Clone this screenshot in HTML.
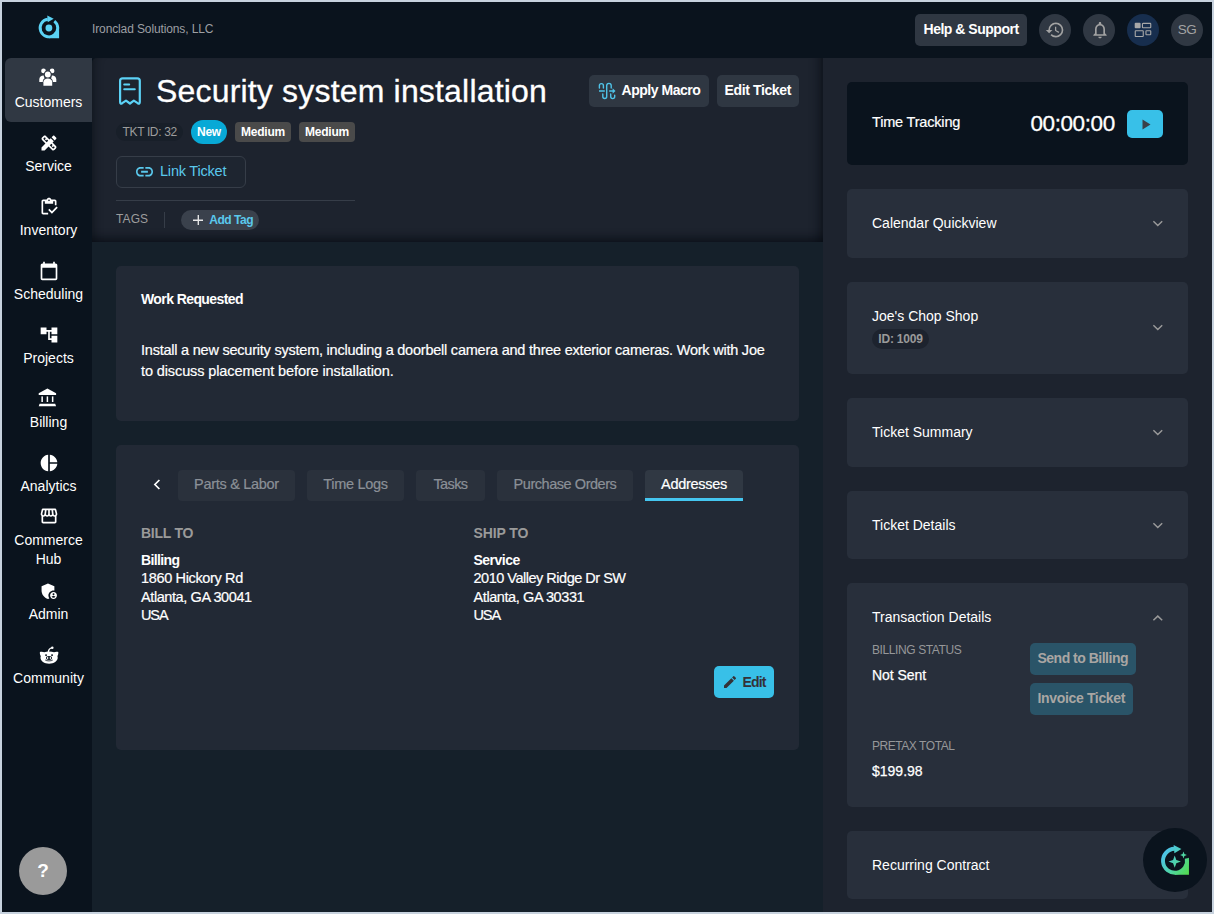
<!DOCTYPE html>
<html lang="en">
<head>
<meta charset="utf-8">
<title>Security system installation</title>
<style>
*{box-sizing:border-box;margin:0;padding:0}
html,body{width:1214px;height:914px;overflow:hidden;background:#c7d2de}
body{font-family:"Liberation Sans",sans-serif;color:#fff;position:relative}
#app{position:absolute;left:2px;top:2px;width:1210px;height:910px;background:#0a131d;overflow:hidden}
#pg{position:absolute;left:-2px;top:-2px;width:1214px;height:914px}
.a{position:absolute}
.t{position:absolute;white-space:nowrap;font-size:14px;line-height:16px}
.r{font-size:14.500px;-webkit-text-stroke:.2px}
.b{font-weight:bold;font-size:14px;letter-spacing:-.45px}
.nav{position:absolute;left:5px;width:87px;height:64px}
.nav svg{position:absolute;left:33.6px;top:10.6px;width:20px;height:20px}
.nav span{position:absolute;left:0;width:87px;top:36px;font-size:14px;line-height:16px;color:#fff;text-align:center;white-space:nowrap}
.card{position:absolute;left:847px;width:341px;background:#282f3b;border-radius:5px}
.ttl{position:absolute;left:872px;font-size:14px;line-height:16px;color:#fff;white-space:nowrap}
.chev{position:absolute;left:1151.5px;width:12px;height:8px}
.btn{position:absolute;border-radius:5px;background:#2f3742;height:32px}
.pcard{position:absolute;left:116px;width:683px;background:#222935;border-radius:5px}
.tab{position:absolute;top:470px;height:31px;background:#2a313c;border-radius:4px}
.tab span{position:absolute;top:6px;left:0;width:100%;text-align:center;color:#8b9097;font-size:14.500px;line-height:16px;white-space:nowrap;-webkit-text-stroke:.2px;letter-spacing:-.3px}
.circ{position:absolute;top:14px;width:32px;height:32px;border-radius:50%;background:#303843}
.pill{position:absolute;border-radius:12px}
</style>
</head>
<body>
<div id="app"><div id="pg">
<!-- TOP BAR -->
<svg class="a" style="left:37px;top:14px;width:24px;height:26px" viewBox="37 14 24 26">
  <g fill="#5ad2f4">
    <path d="M54.320 21.070 A8.800 8.800 0 1 1 47.830 19.270" fill="none" stroke="#5ad2f4" stroke-width="2.900"/>
    <path d="M59.100 27 V38.200 H48.900 V37.700 A9.700 9.700 0 0 0 58.600 28 V27 Z"/>
    <path d="M47.300 15.400 L53.700 18.800 L47.700 22.300 Z"/>
    <circle cx="48.900" cy="28" r="3.400"/>
  </g>
</svg>
<div class="t" style="left:92px;top:22px;font-size:12px;line-height:14px;color:#9d9fa3;letter-spacing:-.12px">Ironclad Solutions, LLC</div>

<div class="btn" style="left:915px;top:14px;width:112px"><span class="t b" style="left:8.500px;top:6.500px;letter-spacing:-.48px">Help &amp; Support</span></div>

<div class="circ" style="left:1039px">
  <svg class="a" style="left:6.200px;top:5.700px;width:20px;height:20px" viewBox="0 0 24 24" fill="#a3a3a3"><path d="M13 3a9 9 0 0 0-9 9H1l3.890 3.890.070.140L9 12H6c0-3.870 3.130-7 7-7s7 3.130 7 7-3.130 7-7 7c-1.930 0-3.680-.79-4.940-2.060l-1.420 1.420A8.954 8.954 0 0 0 13 21a9 9 0 0 0 0-18zm-1 5v5l4.250 2.520.770-1.280-3.520-2.090V8z"/></svg>
</div>
<div class="circ" style="left:1083px">
  <svg class="a" style="left:6.500px;top:6px;width:20px;height:20px" viewBox="0 0 24 24" fill="#a3a3a3"><path d="M12 22c1.100 0 2-.9 2-2h-4c0 1.100.9 2 2 2zm6-6v-5c0-3.070-1.630-5.640-4.500-6.320V4c0-.83-.67-1.500-1.500-1.500s-1.500.67-1.500 1.500v.68C7.640 5.360 6 7.920 6 11v5l-2 2v1h16v-1l-2-2zm-2 1H8v-6c0-2.480 1.510-4.500 4-4.500s4 2.020 4 4.500v6z"/></svg>
</div>
<div class="circ" style="left:1127px;background:#172e4e">
  <svg class="a" style="left:7px;top:8px;width:18px;height:16px" viewBox="0 0 18 16" fill="none" stroke="#a8a8a8" stroke-width="1.100">
    <rect x="0.700" y="0.800" width="5.900" height="5.500" rx="1" fill="#a8a8a8" stroke="none"/>
    <rect x="8.450" y="1.350" width="8.300" height="4.400" rx=".6"/>
    <rect x="1.250" y="8.750" width="8" height="5.800" rx=".6"/>
    <rect x="11.950" y="8.750" width="4.800" height="4" rx=".6"/>
  </svg>
</div>
<div class="circ" style="left:1171px"><span class="t" style="left:0;width:32px;text-align:center;top:7.500px;font-size:13.500px;line-height:16px;letter-spacing:-.5px;color:#a3a3a3">SG</span></div>

<!-- SIDEBAR -->
<div class="a" style="left:5px;top:58px;width:87px;height:64px;border-radius:6px 0 0 6px;background:#303843"></div>
<div class="nav" style="top:58px">
  <svg viewBox="37.500 67 20 20" style="left:32.500px;top:9px" fill="#fff">
    <circle cx="43" cy="70.900" r="2.350"/><circle cx="51.600" cy="70.900" r="2.350"/>
    <circle cx="47.300" cy="74.500" r="3.900" fill="#303843"/><circle cx="47.300" cy="74.500" r="2.900"/>
    <path d="M38.800 81.900 V79.200 C38.800 76.800 40.800 75.300 43.200 75.400 C43.300 77 44.100 78.200 44.100 78.200 C42.800 79 42.300 80.200 42.300 81.900 Z"/>
    <path d="M55.800 81.900 V79.200 C55.800 76.800 53.800 75.300 51.400 75.400 C51.300 77 50.500 78.200 50.500 78.200 C51.800 79 52.300 80.200 52.300 81.900 Z"/>
    <path d="M42.900 85.800 V82.200 C42.900 79.700 44.900 78.500 47.300 78.500 C49.700 78.500 51.700 79.700 51.700 82.200 V85.800 Z"/>
  </svg>
  <span>Customers</span>
</div>
<div class="nav" style="top:122px">
  <svg viewBox="0 0 24 24" fill="#fff"><path d="M16.240 11.510l1.570-1.570-3.750-3.750-1.570 1.570-4.140-4.130c-.78-.78-2.050-.78-2.830 0l-1.900 1.900c-.78.780-.78 2.050 0 2.830l4.130 4.130L3 17.250V21h3.750l4.760-4.760 4.130 4.130c.95.950 2.230.6 2.830 0l1.900-1.900c.78-.78.780-2.050 0-2.830l-4.130-4.130zm-7.060-.44L5.040 6.940l1.890-1.900L8.200 6.310 7.020 7.500l1.410 1.410 1.190-1.190 1.450 1.450-1.890 1.900zm7.880 7.890l-4.130-4.130 1.900-1.900 1.450 1.450-1.190 1.190 1.410 1.410 1.190-1.190 1.270 1.270-1.900 1.900zM20.710 7.040c.39-.39.390-1.020 0-1.410l-2.340-2.340c-.47-.47-1.120-.29-1.410 0l-1.830 1.830 3.750 3.750 1.830-1.830z"/></svg>
  <span>Service</span>
</div>
<div class="nav" style="top:186px">
  <svg viewBox="0 0 24 24" fill="#fff"><path d="M5 5h2v3h10V5h2v5h2V5c0-1.100-.9-2-2-2h-4.180C14.400 1.840 13.300 1 12 1s-2.400.84-2.820 2H5c-1.100 0-2 .9-2 2v14c0 1.100.9 2 2 2h6v-2H5V5zm7-2c.55 0 1 .45 1 1s-.45 1-1 1-1-.45-1-1 .45-1 1-1z"/><path d="M21 11.500l-5.490 5.500-3.010-3-1.500 1.500 4.510 4.500 6.990-7z"/></svg>
  <span>Inventory</span>
</div>
<div class="nav" style="top:250px">
  <svg viewBox="0 0 24 24" fill="#fff"><path d="M20 3h-1V1h-2v2H7V1H5v2H4c-1.100 0-2 .9-2 2v16c0 1.100.9 2 2 2h16c1.100 0 2-.9 2-2V5c0-1.100-.9-2-2-2zm0 18H4V8h16v13z"/></svg>
  <span>Scheduling</span>
</div>
<div class="nav" style="top:314px">
  <svg viewBox="0 0 24 24" fill="#fff"><path d="M22 11V3h-7v3H9V3H2v8h7V8h2v10h4v3h7v-8h-7v3h-2V8h2v3z"/></svg>
  <span>Projects</span>
</div>
<div class="nav" style="top:378px">
  <svg viewBox="37 387 20 20" style="left:32px;top:9px" fill="#fff">
    <path d="M38.700 394.900 V393.300 L47.400 388.600 L56.100 393.300 V394.900 Z"/>
    <rect x="41.400" y="396.400" width="1.500" height="5.600"/><rect x="46.650" y="396.400" width="1.500" height="5.600"/><rect x="51.900" y="396.400" width="1.500" height="5.600"/>
    <path d="M38.700 406.200 L39.600 403.800 H55.200 L56.100 406.200 Z"/>
  </svg>
  <span>Billing</span>
</div>
<div class="nav" style="top:442px">
  <svg viewBox="0 0 24 24" fill="#fff"><path d="M11 2v20c-5.070-.5-9-4.790-9-10s3.930-9.500 9-10zm2.030 0v8.990H22c-.47-4.740-4.240-8.520-8.970-8.990zm0 11.010V22c4.740-.47 8.500-4.250 8.970-8.990h-8.970z"/></svg>
  <span>Analytics</span>
</div>
<div class="nav" style="top:506px">
  <svg viewBox="0 0 24 24" style="top:0.200px;left:34px" fill="#fff"><path d="M21.900 8.890l-1.050-4.370c-.22-.9-1-1.520-1.910-1.520H5.050c-.9 0-1.690.63-1.900 1.520L2.100 8.890c-.24 1.020-.02 2.060.62 2.880.8.110.19.190.28.290V19c0 1.100.9 2 2 2h14c1.100 0 2-.9 2-2v-6.940c.09-.9.200-.18.280-.28.640-.82.870-1.870.62-2.890zm-2.990-3.900l1.050 4.370c.1.420.1.840-.25 1.170-.14.180-.44.470-.94.470-.61 0-1.140-.49-1.210-1.140L16.980 5l1.930-.01zM13 5h1.960l.54 4.520c.5.390-.7.780-.33 1.070-.22.260-.54.410-.95.410-.67 0-1.220-.59-1.220-1.310V5zM8.490 9.520L9.040 5H11v4.690c0 .72-.55 1.310-1.290 1.310-.34 0-.65-.15-.89-.41-.25-.29-.37-.68-.33-1.070zm-4.450-.16L5.050 5h1.970l-.58 4.860c-.8.650-.6 1.140-1.210 1.140-.49 0-.8-.29-.93-.47-.27-.32-.36-.75-.26-1.170zM5 19v-6.030c.8.010.15.030.23.030.87 0 1.660-.36 2.240-.95.600.6 1.400.95 2.310.95.870 0 1.650-.36 2.230-.93.590.57 1.390.93 2.290.93.840 0 1.640-.35 2.240-.95.580.59 1.370.95 2.240.95.080 0 .15-.2.230-.03V19H5z"/></svg>
  <span style="top:25px;line-height:18.600px">Commerce<br>Hub</span>
</div>
<div class="nav" style="top:570px">
  <svg viewBox="0 0 24 24" style="width:20.500px;height:20.500px" fill="#fff"><path d="M17 11c.34 0 .67.040 1 .09V6.270L10.500 3 3 6.270v4.910c0 4.540 3.200 8.790 7.500 9.820.55-.13 1.080-.32 1.600-.55A5.973 5.973 0 0 1 11 17c0-3.310 2.690-6 6-6z"/><path d="M17 13c-2.210 0-4 1.790-4 4s1.790 4 4 4 4-1.790 4-4-1.790-4-4-4zm0 1.380c.62 0 1.120.51 1.120 1.120s-.51 1.120-1.120 1.120-1.120-.51-1.120-1.120.5-1.120 1.120-1.120zm0 5.370c-.93 0-1.740-.46-2.240-1.170.05-.72 1.510-1.080 2.240-1.080s2.190.36 2.240 1.080c-.5.710-1.310 1.170-2.240 1.170z"/></svg>
  <span>Admin</span>
</div>
<div class="nav" style="top:634px">
  <svg viewBox="38 645 22 20" style="left:33px;top:11px;width:22px;height:20px" fill="#fff">
    <path d="M39.900 652 C41.300 651.400 43 651.600 44.200 652.300 C45.600 651.700 47.200 651.400 49.100 651.400 C51 651.400 52.600 651.700 54 652.300 C55.200 651.600 56.900 651.400 58.300 652 C58.500 653.600 58.100 655 57.400 656 C57.600 656.600 57.700 657.200 57.700 657.800 C57.700 661.200 53.900 663.700 49.100 663.700 C44.300 663.700 40.500 661.200 40.500 657.800 C40.500 657.200 40.600 656.600 40.800 656 C40.100 655 39.700 653.600 39.900 652 Z"/>
    <path d="M48.300 652 C48.600 649.500 49.800 648.100 52 647.800" fill="none" stroke="#fff" stroke-width="1.300"/>
    <circle cx="52.300" cy="647.800" r="1.250"/>
    <rect x="45.200" y="654.300" width="1.700" height="1.600" rx=".4" fill="#0a131d"/>
    <rect x="51.200" y="654.300" width="1.700" height="1.600" rx=".4" fill="#0a131d"/>
    <ellipse cx="49" cy="658" rx="3" ry="1.900" fill="#0a131d"/>
    <ellipse cx="47.600" cy="658" rx=".75" ry="1" fill="#fff"/><ellipse cx="50.400" cy="658" rx=".75" ry="1" fill="#fff"/>
    <path d="M45.200 660 C46.500 661.200 51.500 661.200 52.800 660" fill="none" stroke="#0a131d" stroke-width=".8"/>
  </svg>
  <span>Community</span>
</div>
<div class="a" style="left:19px;top:847px;width:48px;height:48px;border-radius:50%;background:#9a9a9a"><span class="t" style="left:0;width:48px;text-align:center;top:13px;font-size:19px;line-height:22px;font-weight:bold">?</span></div>
<!-- MAIN -->
<div class="a" style="left:92px;top:58px;width:731px;height:856px;background:#15202a;border-radius:5px 0 0 0"></div>
<div class="a" style="left:92px;top:58px;width:731px;height:184px;background:#1d232e;border-radius:5px 0 0 0;box-shadow:inset 0 -12px 9px -8px rgba(4,8,14,.62), inset 12px 0 10px -10px rgba(4,8,14,.45), inset -14px 0 10px -10px rgba(4,8,14,.5)"></div>

<svg class="a" style="left:116px;top:74px;width:28px;height:34px" viewBox="116 74 28 34" fill="none" stroke="#5cd2f6" stroke-width="2.200" stroke-linejoin="round" stroke-linecap="round">
  <path d="M120.100 102 V80.800 Q120.100 78.300 122.600 78.300 H137.300 Q139.800 78.300 139.800 80.800 V102 Q139.800 104.400 137.700 103.200 L133.850 100.600 L129.950 103.500 L126 100.600 L122.200 103.200 Q120.100 104.400 120.100 102 Z"/>
  <path d="M124.200 84.400 H129.200 M124.200 89.200 H134.800" stroke-width="2"/>
</svg>
<div class="t" style="left:156px;top:72px;font-size:32px;line-height:38px;letter-spacing:.18px;-webkit-text-stroke:.3px">Security system installation</div>

<div class="btn" style="left:589px;top:75px;width:120px">
  <svg class="a" style="left:8px;top:6px;width:20px;height:20px" viewBox="597 81 20 20" fill="none" stroke="#4fc3e8" stroke-width="1.400" stroke-linecap="round">
    <path d="M599.400 88 V85.600 a2 2 0 0 1 4 0 V88"/>
    <path d="M602.800 94 V96.600 a1.950 1.950 0 0 0 3.900 0 V85.600 a2.250 2.250 0 0 1 4.500 0 V88"/>
    <path d="M610.700 94 V96.600 a2 2 0 0 0 4 0 V95.300"/>
    <path d="M599 91 H604.800 M609.200 91 H613.500" stroke-linecap="butt"/>
    <path d="M612.600 88.300 L615.500 91 L612.600 93.700 Z" fill="#4fc3e8" stroke="none"/>
  </svg>
  <span class="t b" style="left:32.500px;top:6.500px;letter-spacing:-.47px">Apply Macro</span>
</div>
<div class="btn" style="left:717px;top:75px;width:82px"><span class="t b" style="left:7.500px;top:6.500px;letter-spacing:-.37px">Edit Ticket</span></div>

<div class="pill" style="left:116px;top:123px;width:67px;height:18px;background:#181f29"><span class="t" style="left:6.500px;top:2px;font-size:12px;line-height:14px;color:#9d9d9d;letter-spacing:-.35px">TKT ID: 32</span></div>
<div class="pill" style="left:191px;top:120px;width:36px;height:24px;background:#08a9d6"><span class="t" style="left:0;width:36px;text-align:center;top:5px;font-size:12px;line-height:14px;font-weight:bold;letter-spacing:-.3px">New</span></div>
<div class="a" style="left:235px;top:122px;width:56px;height:20px;border-radius:4px;background:#4a4a4a"><span class="t" style="left:0;width:56px;text-align:center;top:3px;font-size:12px;line-height:14px;font-weight:bold;letter-spacing:-.2px">Medium</span></div>
<div class="a" style="left:299px;top:122px;width:56px;height:20px;border-radius:4px;background:#4a4a4a"><span class="t" style="left:0;width:56px;text-align:center;top:3px;font-size:12px;line-height:14px;font-weight:bold;letter-spacing:-.2px">Medium</span></div>

<div class="a" style="left:116px;top:156px;width:130px;height:32px;border:1px solid #363d48;border-radius:6px;background:#1e2530">
  <svg class="a" style="left:19.400px;top:10.300px;width:17px;height:9.600px" viewBox="0 0 20 10" preserveAspectRatio="none" fill="#5ac8ec"><path d="M1.900 5c0-1.710 1.390-3.100 3.100-3.100h4V0H5C2.240 0 0 2.240 0 5s2.240 5 5 5h4V8.100H5C3.290 8.100 1.900 6.710 1.900 5zM6 6h8V4H6v2zm9-6h-4v1.900h4c1.710 0 3.100 1.390 3.100 3.100s-1.390 3.100-3.100 3.100h-4V10h4c2.760 0 5-2.240 5-5s-2.240-5-5-5z"/></svg>
  <span class="t" style="left:43px;top:6px;font-size:14.500px;line-height:17px;letter-spacing:-.2px;color:#5ac8ec">Link Ticket</span>
</div>
<div class="a" style="left:116px;top:200px;width:239px;height:1px;background:#363d48"></div>
<div class="t" style="left:116px;top:212px;font-size:12px;line-height:14px;color:#9d9d9d;letter-spacing:.1px">TAGS</div>
<div class="a" style="left:164px;top:212px;width:1px;height:16px;background:#363d48"></div>
<div class="pill" style="left:181px;top:210px;width:78px;height:20px;background:#3a414c">
  <svg class="a" style="left:11.600px;top:4.700px;width:10.600px;height:10.600px" viewBox="0 0 11 11" stroke="#e8e8e8" stroke-width="1.400"><path d="M5.500 0v11M0 5.500h11"/></svg>
  <span class="t" style="left:28.200px;top:3px;font-size:12px;line-height:14px;font-weight:bold;color:#5ac8ec;letter-spacing:-.45px">Add Tag</span>
</div>

<div class="pcard" style="top:266px;height:155px">
  <span class="t b" style="left:25px;top:25px;letter-spacing:-.59px">Work Requested</span>
  <div class="a" style="left:25px;top:74px;width:650px;font-size:14.500px;line-height:21px;white-space:nowrap;letter-spacing:-.225px;-webkit-text-stroke:.2px #fff">Install a new security system, including a doorbell camera and three exterior cameras. Work with Joe<br><span style="letter-spacing:-.11px">to discuss placement before installation.</span></div>
</div>

<div class="pcard" style="top:445px;height:305px"></div>
<svg class="a" style="left:152px;top:478px;width:10px;height:13px" viewBox="152 478 10 13" fill="none" stroke="#fff" stroke-width="1.700"><path d="M159.400 480 L154.900 484.500 L159.400 489"/></svg>
<div class="tab" style="left:178px;width:117px"><span>Parts &amp; Labor</span></div>
<div class="tab" style="left:307px;width:97px"><span>Time Logs</span></div>
<div class="tab" style="left:416px;width:69px"><span style="letter-spacing:-.6px">Tasks</span></div>
<div class="tab" style="left:497px;width:136px"><span style="letter-spacing:-.45px">Purchase Orders</span></div>
<div class="tab" style="left:645px;width:98px;background:#303843;border-radius:4px 4px 0 0;border-bottom:3px solid #45c6f0"><span style="color:#fff">Addresses</span></div>

<span class="t b" style="left:141px;top:525px;font-size:14px;letter-spacing:-.25px;color:#9a9a9a">BILL TO</span>
<span class="t b" style="left:141px;top:552px;letter-spacing:-.64px">Billing</span>
<span class="t r" style="left:141px;top:570px;letter-spacing:-.35px">1860 Hickory Rd</span>
<span class="t r" style="left:141px;top:589px;letter-spacing:-.41px">Atlanta, GA 30041</span>
<span class="t r" style="left:141px;top:607px;letter-spacing:-1.100px">USA</span>
<span class="t b" style="left:473.500px;top:525px;font-size:14px;letter-spacing:-.1px;color:#9a9a9a">SHIP TO</span>
<span class="t b" style="left:473.500px;top:552px;letter-spacing:-.5px">Service</span>
<span class="t r" style="left:473.500px;top:570px;letter-spacing:-.49px">2010 Valley Ridge Dr SW</span>
<span class="t r" style="left:473.500px;top:589px;letter-spacing:-.41px">Atlanta, GA 30331</span>
<span class="t r" style="left:473.500px;top:607px;letter-spacing:-1.100px">USA</span>

<div class="a" style="left:714px;top:666px;width:60px;height:32px;border-radius:5px;background:#38c0e8">
  <svg class="a" style="left:7.700px;top:7.700px;width:16px;height:16px" viewBox="0 0 24 24" fill="#343238"><path d="M3 17.250V21h3.750L17.810 9.940l-3.750-3.750L3 17.250zM20.710 7.040a.996.996 0 0 0 0-1.410l-2.340-2.340a.996.996 0 0 0-1.410 0l-1.830 1.830 3.750 3.750 1.830-1.830z"/></svg>
  <span class="t b" style="left:28.500px;top:7.500px;color:#343238;letter-spacing:-.85px">Edit</span>
</div>
<!-- RIGHT -->
<div class="a" style="left:823px;top:58px;width:391px;height:856px;background:#1d232e"></div>

<div class="card" style="top:82px;height:83px;background:#0a131d"></div>
<div class="ttl" style="top:114px;font-size:14.500px;letter-spacing:-.18px;-webkit-text-stroke:.2px">Time Tracking</div>
<div class="t" style="left:1030.500px;top:110.600px;font-size:22.500px;line-height:26px;letter-spacing:-.42px;-webkit-text-stroke:.3px">00:00:00</div>
<div class="a" style="left:1127px;top:110px;width:36px;height:28px;border-radius:5px;background:#38c0e8">
  <svg class="a" style="left:14.500px;top:8.500px;width:9px;height:11px" viewBox="0 0 9 11" fill="#3a4049"><path d="M0.500 0.600 L8.500 5.500 L0.500 10.400 Z"/></svg>
</div>

<div class="card" style="top:189px;height:69px"></div>
<div class="ttl" style="top:215px">Calendar Quickview</div>
<svg class="chev" style="top:219.900px" viewBox="0 0 12 8" fill="none" stroke="#9a9a9a" stroke-width="1.500"><path d="M1.400 1.300L5.800 5.500l4.400-4.200"/></svg>

<div class="card" style="top:282px;height:92px"></div>
<div class="ttl" style="top:308px">Joe's Chop Shop</div>
<div class="pill" style="left:872px;top:329px;width:57px;height:20px;background:#1d232e"><span class="t" style="left:0;width:57px;text-align:center;top:3px;font-size:12px;line-height:14px;font-weight:bold;color:#9a9a9a;letter-spacing:-.2px">ID: 1009</span></div>
<svg class="chev" style="top:323.800px" viewBox="0 0 12 8" fill="none" stroke="#9a9a9a" stroke-width="1.500"><path d="M1.400 1.300L5.800 5.500l4.400-4.200"/></svg>

<div class="card" style="top:398px;height:69px"></div>
<div class="ttl" style="top:424px">Ticket Summary</div>
<svg class="chev" style="top:428.700px" viewBox="0 0 12 8" fill="none" stroke="#9a9a9a" stroke-width="1.500"><path d="M1.400 1.300L5.800 5.500l4.400-4.200"/></svg>

<div class="card" style="top:491px;height:68px"></div>
<div class="ttl" style="top:517px">Ticket Details</div>
<svg class="chev" style="top:521.700px" viewBox="0 0 12 8" fill="none" stroke="#9a9a9a" stroke-width="1.500"><path d="M1.400 1.300L5.800 5.500l4.400-4.200"/></svg>

<div class="card" style="top:583px;height:224px"></div>
<div class="ttl" style="top:609px">Transaction Details</div>
<svg class="chev" style="top:613.600px" viewBox="0 0 12 8" fill="none" stroke="#9a9a9a" stroke-width="1.500"><path d="M1.400 6.300L5.800 2.100l4.400 4.200"/></svg>
<div class="t" style="left:872px;top:643px;font-size:12px;line-height:14px;color:#969799;letter-spacing:-.4px">BILLING STATUS</div>
<div class="t" style="left:872px;top:667px;letter-spacing:-.05px;-webkit-text-stroke:.25px">Not Sent</div>
<div class="a" style="left:1030px;top:643px;width:106px;height:32px;border-radius:5px;background:#2a5468"><span class="t b" style="left:7.500px;top:7px;color:#a9a6a3;letter-spacing:-.5px">Send to Billing</span></div>
<div class="a" style="left:1030px;top:683px;width:103px;height:32px;border-radius:5px;background:#2a5468"><span class="t b" style="left:7.500px;top:7px;color:#a9a6a3;letter-spacing:-.34px">Invoice Ticket</span></div>
<div class="t" style="left:872px;top:739px;font-size:12px;line-height:14px;color:#969799;letter-spacing:-.45px">PRETAX TOTAL</div>
<div class="t" style="left:872px;top:763px;-webkit-text-stroke:.25px">$199.98</div>

<div class="card" style="top:831px;height:68px"></div>
<div class="ttl" style="top:857px">Recurring Contract</div>

<!-- AI FAB -->
<div class="a" style="left:1143px;top:828px;width:64px;height:64px;border-radius:50%;background:#0a131d">
  <svg class="a" style="left:0;top:0;width:64px;height:64px" viewBox="0 0 64 64">
    <defs><linearGradient id="g1" gradientUnits="userSpaceOnUse" x1="18" y1="26" x2="45" y2="46"><stop offset="0" stop-color="#4cc0f0"/><stop offset="0.550" stop-color="#4fd6a4"/><stop offset="1" stop-color="#52da4e"/></linearGradient></defs>
    <path d="M31.580 20.810 A12 12 0 1 0 43.740 30.310" fill="none" stroke="url(#g1)" stroke-width="3.900"/>
    <g fill="url(#g1)">
      <path d="M45.950 29.700 V46.750 H32 V46 A13.200 13.200 0 0 0 45.200 32.800 V30 Z"/>
      <path d="M30.600 17 L38.400 21.100 L31.400 25.200 Z"/>
      <path d="M31.700 27.400 L33.300 32 L37.900 33.600 L33.300 35.200 L31.700 39.800 L30.100 35.200 L25.500 33.600 L30.100 32 Z"/>
      <path d="M40.500 23.600 L41.400 26.100 L43.900 27 L41.400 27.900 L40.500 30.400 L39.600 27.900 L37.100 27 L39.600 26.100 Z"/>
    </g>
  </svg>
</div>

</div></div>
</body>
</html>
